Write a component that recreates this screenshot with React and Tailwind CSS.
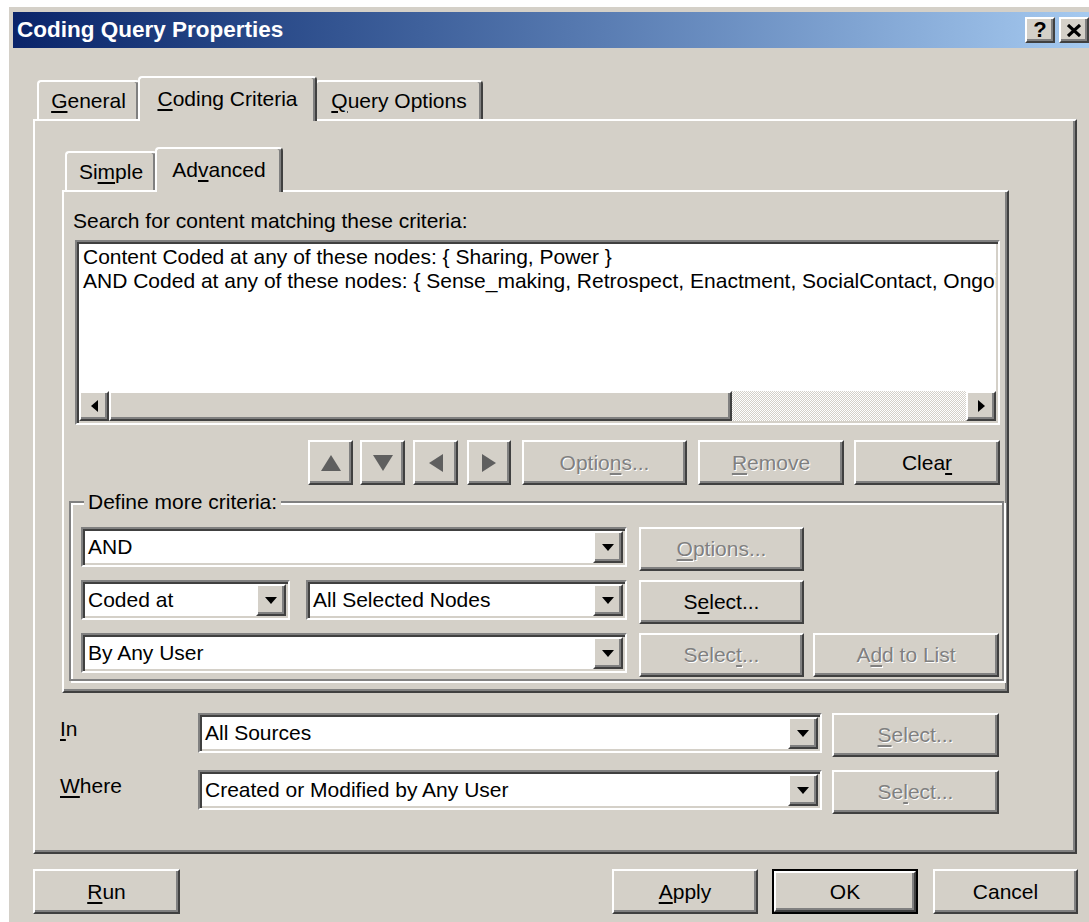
import React from 'react'

// Win2000 bevels, doubled for the large dialog
const raised =
  'border-2 border-t-white border-l-white border-r-[#404040] border-b-[#404040] shadow-[inset_-2px_-2px_0_#808080]'
const sunken =
  'border-2 border-t-[#808080] border-l-[#808080] border-r-white border-b-white shadow-[inset_2px_2px_0_#404040,inset_-2px_-2px_0_#d4d0c8]'
const greyed = 'text-[#808080] [text-shadow:1px_1px_0_#fff]'

function Key({ children }) {
  return <span className="underline decoration-[2px] underline-offset-[3px]">{children}</span>
}

function Button({ className = '', disabled = false, children }) {
  return (
    <div
      className={`${raised} shrink-0 flex items-center justify-center whitespace-nowrap ${
        disabled ? greyed : 'text-black'
      } ${className}`}
    >
      {children}
    </div>
  )
}

function DropArrow() {
  return (
    <svg width="12" height="7" viewBox="0 0 12 7">
      <polygon points="0,0 12,0 6,7" fill="#000" />
    </svg>
  )
}

function Combo({ className = '', children }) {
  return (
    <div className={`${sunken} bg-white p-[2px] flex shrink-0 ${className}`}>
      <div className="flex-1 min-w-0 flex items-center pl-[3px] whitespace-nowrap overflow-hidden">
        {children}
      </div>
      <div className={`${raised} bg-[#d4d0c8] w-[30px] flex items-center justify-center`}>
        <DropArrow />
      </div>
    </div>
  )
}

function Tab({ active = false, className = '', children }) {
  return (
    <div
      className={`shrink-0 flex items-center justify-center rounded-t-[4px] border-2 border-b-0 border-t-white border-l-white border-r-[#404040] shadow-[inset_-2px_0_0_#808080] bg-[#d4d0c8] ${
        active ? 'relative z-10 h-[45px] -mb-[2px] pb-[2px]' : 'h-[39px]'
      } ${className}`}
    >
      {children}
    </div>
  )
}

function Arrow({ dir }) {
  const pts = {
    up: '10,0 20,16 0,16',
    down: '0,0 20,0 10,16',
    left: '0,9 14,0 14,18',
    right: '0,0 14,9 0,18',
  }[dir]
  const vertical = dir === 'up' || dir === 'down'
  return (
    <svg width={vertical ? 20 : 14} height={vertical ? 16 : 18} viewBox={vertical ? '0 0 20 16' : '0 0 14 18'}>
      <polygon points={pts} fill="#5f5f5f" />
    </svg>
  )
}

function ScrollArrow({ dir }) {
  return (
    <div className={`${raised} bg-[#d4d0c8] w-[30px] shrink-0 flex items-center justify-center`}>
      <svg width="7" height="12" viewBox="0 0 7 12">
        <polygon points={dir === 'left' ? '0,6 7,0 7,12' : '0,0 7,6 0,12'} fill="#000" />
      </svg>
    </div>
  )
}

function TitleButton({ children }) {
  return (
    <div
      className={`${raised} bg-[#d4d0c8] w-[30px] h-[26px] flex items-center justify-center font-bold text-[22px] leading-none text-black`}
    >
      {children}
    </div>
  )
}

export default function App() {
  return (
    <div className="w-[1089px] h-[922px] overflow-hidden bg-white pl-[9px] pt-[7px] font-['Liberation_Sans',Arial,sans-serif] text-[21px] leading-[24px] text-black">
      <div className="w-[1088px] h-[915px] bg-[#d4d0c8] pt-[5px] px-[4px]">
        {/* caption */}
        <div className="h-[36px] flex items-center bg-linear-to-r from-[#0a246a] to-[#a6caf0] pl-[4px] pr-[4px]">
          <span className="text-white font-bold text-[22.5px]">Coding Query Properties</span>
          <div className="ml-auto flex gap-[4px]">
            <TitleButton>?</TitleButton>
            <TitleButton>
              <svg width="14" height="13" viewBox="0 0 14 13">
                <path d="M1 1 L13 12 M13 1 L1 12" stroke="#000" strokeWidth="3.2" />
              </svg>
            </TitleButton>
          </div>
        </div>

        {/* top tabs */}
        <div className="mt-[28px] ml-[24px] h-[43px] flex items-end">
          <Tab className="w-[103px]">
            <span><Key>G</Key>eneral</span>
          </Tab>
          <Tab active className="w-[179px] -ml-[2px] -mr-[2px]">
            <span><Key>C</Key>oding Criteria</span>
          </Tab>
          <Tab className="w-[168px]">
            <span><Key>Q</Key>uery Options</span>
          </Tab>
        </div>

        {/* Coding Criteria page */}
        <div className={`${raised} ml-[20px] w-[1044px] h-[735px] pt-[26px]`}>
          <div className="ml-[30px] h-[43px] flex items-end">
            <Tab className="w-[92px]">
              <span>Si<Key>m</Key>ple</span>
            </Tab>
            <Tab active className="w-[128px] -ml-[2px]">
              <span>Ad<Key>v</Key>anced</span>
            </Tab>
          </div>

          {/* Advanced page */}
          <div className={`${raised} ml-[27px] w-[947px] h-[503px]`}>
            <div className="ml-[9px] mt-[17px]">Search for content matching these criteria:</div>

            <div className={`${sunken} bg-white p-[2px] ml-[11px] mt-[7px] w-[925px] h-[185px] flex flex-col`}>
              <div className="flex-1 min-h-0 overflow-hidden whitespace-nowrap pl-[4px] pt-[1px]">
                <div>Content Coded at any of these nodes: {'{'} Sharing, Power {'}'}</div>
                <div>
                  AND Coded at any of these nodes: {'{'} Sense_making, Retrospect, Enactment, SocialContact, Ongoing,
                  Extraction, Plausibility {'}'}
                </div>
              </div>
              <div className="h-[30px] flex shrink-0">
                <ScrollArrow dir="left" />
                <div className={`${raised} bg-[#d4d0c8] w-[623px] shrink-0`} />
                <div className="flex-1 [background-image:repeating-conic-gradient(#ffffff_0_25%,#d4d0c8_0_50%)] [background-size:2px_2px]" />
                <ScrollArrow dir="right" />
              </div>
            </div>

            <div className="mt-[15px] ml-[244px] flex items-start">
              <Button className="w-[45px] h-[45px]"><Arrow dir="up" /></Button>
              <Button className="ml-[7px] w-[45px] h-[45px]"><Arrow dir="down" /></Button>
              <Button className="ml-[8px] w-[45px] h-[45px]"><Arrow dir="left" /></Button>
              <Button className="ml-[9px] w-[44px] h-[45px]"><Arrow dir="right" /></Button>
              <Button disabled className="ml-[11px] w-[165px] h-[45px]">
                <span>Optio<Key>n</Key>s...</span>
              </Button>
              <Button disabled className="ml-[11px] w-[146px] h-[45px]">
                <span><Key>R</Key>emove</span>
              </Button>
              <Button className="ml-[10px] w-[146px] h-[45px]">
                <span>Clea<Key>r</Key></span>
              </Button>
            </div>

            <fieldset className="ml-[5px] mt-[5px] w-[935px] min-w-0 border-2 border-[#808080] shadow-[inset_2px_2px_0_#fff,2px_2px_0_#fff] px-[10px] pt-[13px] pb-[2px]">
              <legend className="ml-[3px] px-[4px] bg-[#d4d0c8]">Define more criteria:</legend>

              <div className="flex items-start">
                <Combo className="w-[546px] h-[40px]">AND</Combo>
                <Button disabled className="ml-[12px] w-[165px] h-[44px]">
                  <span><Key>O</Key>ptions...</span>
                </Button>
              </div>

              <div className="mt-[9px] flex items-start">
                <Combo className="w-[209px] h-[40px]">Coded at</Combo>
                <Combo className="ml-[16px] w-[321px] h-[40px]">All Selected Nodes</Combo>
                <Button className="ml-[12px] w-[165px] h-[44px]">
                  <span>S<Key>e</Key>lect...</span>
                </Button>
              </div>

              <div className="mt-[9px] flex items-start">
                <Combo className="w-[546px] h-[40px]">By Any User</Combo>
                <Button disabled className="ml-[12px] w-[165px] h-[44px]">
                  <span>Selec<Key>t</Key>...</span>
                </Button>
                <Button disabled className="ml-[9px] w-[186px] h-[44px]">
                  <span>A<Key>d</Key>d to List</span>
                </Button>
              </div>
            </fieldset>
          </div>

          <div className="mt-[20px] ml-[25px] flex items-start">
            <div className="w-[138px] mt-[4px]">
              <Key>I</Key>n
            </div>
            <Combo className="w-[624px] h-[40px]">All Sources</Combo>
            <Button disabled className="ml-[10px] w-[167px] h-[44px]">
              <span><Key>S</Key>elect...</span>
            </Button>
          </div>

          <div className="mt-[13px] ml-[25px] flex items-start">
            <div className="w-[138px] mt-[4px]">
              <Key>W</Key>here
            </div>
            <Combo className="w-[624px] h-[40px]">Created or Modified by Any User</Combo>
            <Button disabled className="ml-[10px] w-[167px] h-[44px]">
              <span>Se<Key>l</Key>ect...</span>
            </Button>
          </div>
        </div>

        {/* dialog buttons */}
        <div className="mt-[15px] ml-[20px] flex items-start">
          <Button className="w-[147px] h-[45px]">
            <span><Key>R</Key>un</span>
          </Button>
          <Button className="ml-[432px] w-[146px] h-[45px]">
            <span><Key>A</Key>pply</span>
          </Button>
          <div className="ml-[14px] w-[146px] h-[45px] border-2 border-black flex">
            <Button className="flex-1">OK</Button>
          </div>
          <Button className="ml-[15px] w-[145px] h-[45px]">Cancel</Button>
        </div>
      </div>
    </div>
  )
}
